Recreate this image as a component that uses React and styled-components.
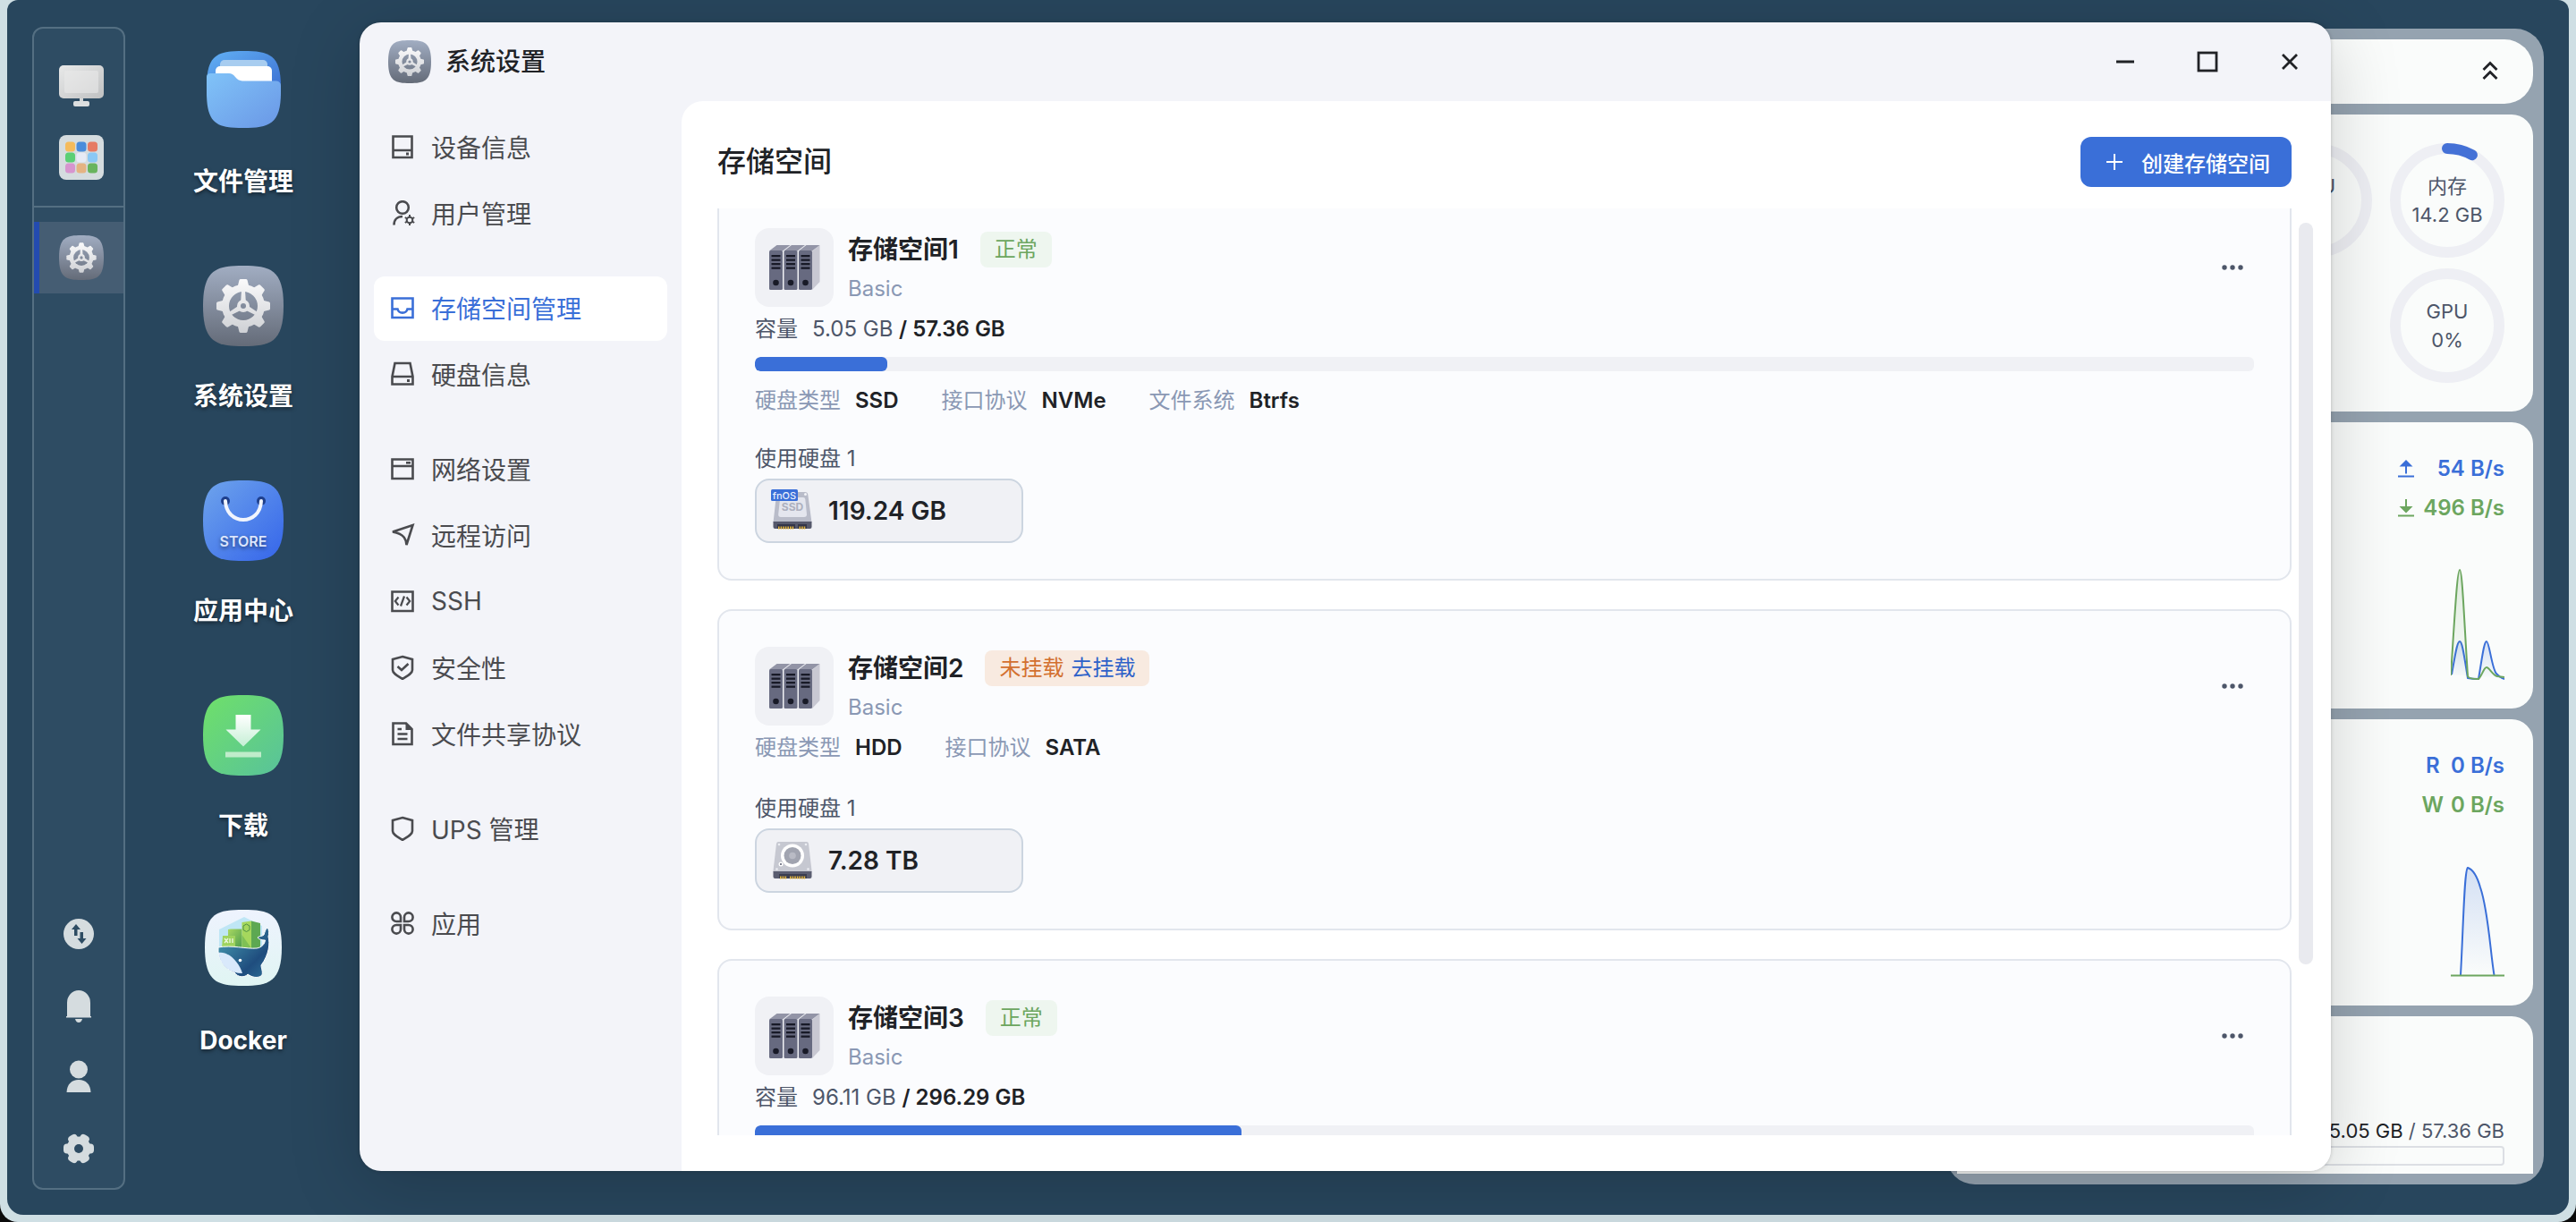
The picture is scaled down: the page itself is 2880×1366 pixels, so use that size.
import React, { useEffect, useRef, useState } from "react";
import styled, { createGlobalStyle } from "styled-components";

const GlobalStyle = createGlobalStyle`
  * {
    box-sizing: border-box;
  }

  body {
    margin: 0;
    background: #0b0b0b;
    font-family: Inter, "Noto Sans CJK SC", sans-serif;
    color: #202226;
  }

  button {
    padding: 0;
    border: 0;
    background: none;
    font: inherit;
    color: inherit;
    cursor: pointer;
  }

  a {
    color: inherit;
    text-decoration: none;
  }

  svg {
    display: block;
    flex: none;
  }
`;

const Screen = styled.div`
  position: relative;
  height: 100vh;
  padding: 0 8px 8px;
  overflow: hidden;
  border-radius: 0 0 20px 20px;
  background: #cfdfe4;
`;

const Desktop = styled.main`
  display: flex;
  height: 100%;
  padding: 30px 28px 28px;
  border-radius: 12px 12px 18px 18px;
  background: #28465d;
`;

const Dock = styled.nav`
  display: flex;
  flex-direction: column;
  width: 104px;
  padding-top: 24px;
  border: 2px solid #546f82;
  border-radius: 12px;
  background: #2e4c63;
`;

const DockButton = styled.button`
  display: flex;
  align-items: center;
  justify-content: center;
  height: 80px;
  border-left: 6px solid ${(p) => (p.$active ? "#234bb0" : "transparent")};
  background: ${(p) => (p.$active ? "#455d73" : "none")};
`;

const DockDivider = styled.hr`
  width: 100%;
  height: 2px;
  margin: 14px 0 16px;
  border: 0;
  background: #546f82;
`;

const DockFooter = styled.div`
  display: flex;
  flex-direction: column;
  margin-top: auto;
  padding-bottom: 4px;
`;

const TrayButton = styled.button`
  display: flex;
  align-items: center;
  justify-content: center;
  height: 80px;
`;

const AppList = styled.div`
  display: flex;
  flex-direction: column;
  align-items: center;
  gap: 74px;
  width: 264px;
  padding-top: 27px;
`;

const AppButton = styled.button`
  display: flex;
  flex-direction: column;
  align-items: center;
  gap: 36px;
  color: #fff;
  font-size: 28px;
  font-weight: 700;
  line-height: 40px;
  text-shadow: 0 2px 4px rgba(0, 0, 0, 0.5);
`;

const Widgets = styled.aside`
  display: flex;
  flex-direction: column;
  gap: 12px;
  width: 668px;
  margin: 2px 0 6px auto;
  padding: 12px;
  overflow: hidden;
  border-radius: 32px;
  background: #95a3b0;
`;

const Widget = styled.section`
  flex: none;
  padding: 30px 32px 32px;
  border-radius: 24px;
  background: #fafcfb;
`;

const WidgetHeader = styled(Widget)`
  display: flex;
  align-items: center;
  justify-content: flex-end;
  height: 72px;
  border-radius: 32px;
`;

const Rings = styled(Widget)`
  display: grid;
  grid-template-columns: 128px 128px;
  gap: 12px 20px;
  justify-content: end;
  padding: 32px;
`;

const RingBox = styled.div`
  display: grid;
  grid-column: ${(p) => p.$column};
  place-items: center;

  > * {
    grid-area: 1 / 1;
  }
`;

const RingText = styled.div`
  height: 64px;
  color: #4d5669;
  font-size: 22px;
  line-height: 32px;
  text-align: center;
`;

const Rates = styled.div`
  display: grid;
  grid-template-columns: auto auto;
  justify-content: end;
  justify-items: end;
  align-items: center;
  column-gap: ${(p) => (p.$narrow ? "8px" : "10px")};
  font-size: 24px;
  font-weight: 600;
  line-height: 44px;
`;

const Rate = styled.span`
  justify-self: ${(p) => (p.$sign ? "center" : "end")};
  color: ${(p) => (p.$down ? "#6ca65f" : "#3a6fd8")};
`;

const ChartBox = styled.div`
  display: flex;
  justify-content: flex-end;
  margin-top: 46px;
`;

const StorageWidget = styled(Widget)`
  flex: 1 0 0;
  padding: 112px 32px 0;
  border-radius: 24px 24px 0 0;
`;

const Usage = styled.div`
  color: #202226;
  font-size: 22px;
  line-height: 33px;
  text-align: right;

  span {
    color: #4d5669;
  }
`;

const UsageTrack = styled.div`
  height: 22px;
  border: 2px solid #dcdfe4;
  border-radius: 4px;
`;

const Window = styled.section`
  position: absolute;
  top: 25px;
  right: 274px;
  bottom: 57px;
  left: 402px;
  display: grid;
  grid-template: 88px minmax(0, 1fr) / 360px minmax(0, 1fr);
  overflow: hidden;
  border-radius: 24px;
  background: #f3f4f9;
  box-shadow: 0 16px 80px rgba(0, 0, 0, 0.18), 0 0 4px rgba(0, 0, 0, 0.2);
`;

const TitleBar = styled.header`
  display: flex;
  grid-column: 1 / -1;
  align-items: center;
  gap: 16px;
  padding-left: 32px;
`;

const WindowTitle = styled.h1`
  margin: 0;
  font-size: 28px;
  font-weight: 500;
  line-height: 40px;
`;

const Controls = styled.div`
  display: flex;
  align-self: stretch;
  margin-left: auto;
`;

const ControlButton = styled.button`
  display: flex;
  align-items: center;
  justify-content: center;
  width: 92px;
`;

const Sidebar = styled.nav`
  display: flex;
  flex-direction: column;
  gap: 34px;
  padding: 16px;
`;

const MenuGroup = styled.div`
  display: flex;
  flex-direction: column;
  gap: 2px;
`;

const MenuItem = styled.a`
  display: flex;
  align-items: center;
  gap: 18px;
  height: 72px;
  padding: 0 0 2px 18px;
  border-radius: 12px;
  background: ${(p) => (p.$active ? "#fff" : "none")};
  color: ${(p) => (p.$active ? "#3a6fd8" : "#4a4b4f")};
  font-size: 28px;
`;

const Content = styled.div`
  display: flex;
  flex-direction: column;
  min-height: 0;
  padding: 40px 20px 40px 40px;
  border-top-left-radius: 24px;
  background: #fff;
`;

const PageHeader = styled.div`
  display: flex;
  align-items: center;
  justify-content: space-between;
  margin-bottom: 24px;
  padding-right: 24px;
`;

const PageTitle = styled.h2`
  margin: 0;
  font-size: 32px;
  font-weight: 500;
  line-height: 48px;
`;

const PrimaryButton = styled.button`
  display: flex;
  align-items: center;
  gap: 20px;
  height: 56px;
  padding: 0 24px 0 28px;
  border-radius: 12px;
  background: #3a6fd8;
  color: #fff;
  font-size: 24px;
  font-weight: 500;
`;

const ScrollArea = styled.div`
  display: flex;
  flex: 1;
  gap: 8px;
  min-height: 0;
`;

const ScrollBody = styled.div`
  display: flex;
  flex: 1;
  flex-direction: column;
  gap: 32px;
  overflow-y: auto;
  scrollbar-width: none;
`;

const ScrollTrack = styled.div`
  width: 16px;
`;

const ScrollThumb = styled.div`
  border-radius: 8px;
  background: #e9eaef;
`;

const Card = styled.article`
  flex: none;
  min-height: ${(p) => (p.$tall ? "436px" : "359px")};
  padding: 40px;
  border: 2px solid #e2e6ed;
  border-radius: 16px;
  background: #fbfcfe;
`;

const CardHeader = styled.div`
  display: flex;
  align-items: center;
  gap: 16px;
`;

const ServerBox = styled.div`
  width: 88px;
  height: 88px;
  border-radius: 16px;
  background: #f0f1f5;
`;

const CardHeading = styled.div`
  flex: 1;
`;

const TitleRow = styled.div`
  display: flex;
  align-items: center;
  gap: 24px;
  height: 48px;
`;

const CardTitle = styled.h3`
  margin: 0;
  font-size: 28px;
  font-weight: 600;
  line-height: 40px;
`;

const Badge = styled.span`
  display: flex;
  gap: 8px;
  padding: 0 16px;
  border-radius: 8px;
  background: ${(p) => (p.$warning ? "#f8eae0" : "#eef6ef")};
  color: ${(p) => (p.$warning ? "#d3702f" : "#6ca65f")};
  font-size: 24px;
  line-height: 40px;

  a {
    color: #2f62c9;
  }
`;

const CardMode = styled.div`
  color: #8a98b4;
  font-size: 24px;
  line-height: 40px;
`;

const MoreButton = styled.button`
  display: flex;
  align-items: center;
  justify-content: center;
  width: 48px;
  height: 48px;
`;

const Capacity = styled.div`
  display: flex;
  gap: 16px;
  color: #4d5669;
  font-size: 24px;
  line-height: 50px;

  strong {
    color: #202226;
    font-weight: 600;
  }
`;

const Progress = styled.div`
  height: 16px;
  margin: 6px 0 8px;
  overflow: hidden;
  border-radius: 6px;
  background: #f0f1f5;
`;

const ProgressFill = styled.div`
  height: 100%;
  border-radius: 6px;
  background: #3a6fd8;
`;

const Specs = styled.dl`
  display: flex;
  gap: 48px;
  margin: 0 0 ${(p) => (p.$loose ? "21px" : "18px")};
  font-size: 24px;
  line-height: 50px;

  div {
    display: flex;
    gap: 16px;
  }

  dt {
    color: #8a98b4;
  }

  dd {
    margin: 0;
    font-weight: 600;
  }
`;

const DiskCount = styled.div`
  color: #4d5669;
  font-size: 24px;
  line-height: 44px;
`;

const Disk = styled.div`
  display: flex;
  align-items: center;
  gap: 16px;
  width: 300px;
  height: 72px;
  padding-left: 16px;
  border: 2px solid #ccd5e0;
  border-radius: 16px;
  background: #f0f1f5;
  font-size: 28px;
  font-weight: 600;
`;

function SettingsIcon({ size, id }) {
  const teeth = [0, 45, 90, 135, 180, 225, 270, 315];
  return (
    <svg width={size} height={size} viewBox="0 0 90 90">
      <defs>
        <linearGradient id={`${id}-bg`} x1="0" y1="0" x2="0" y2="1">
          <stop offset="0" stopColor="#a1adc2" />
          <stop offset="1" stopColor="#646b78" />
        </linearGradient>
        <linearGradient id={`${id}-gear`} gradientUnits="userSpaceOnUse" x1="0" y1="15" x2="0" y2="75">
          <stop offset="0" stopColor="#fafafb" />
          <stop offset="1" stopColor="#cfd1d5" />
        </linearGradient>
        <mask id={`${id}-mask`}>
          <circle cx="45" cy="45" r="24" fill="#fff" />
          {teeth.map((a) => (
            <path
              key={a}
              d="M38.500 24L40.500 16Q41 15 42 15H48Q49 15 49.500 16L51.500 24Z"
              fill="#fff"
              transform={`rotate(${a} 45 45)`}
            />
          ))}
          <circle cx="45" cy="45" r="16" fill="#000" />
          {[0, 120, 240].map((a) => (
            <path key={a} d="M43 28H47L48 42H42Z" fill="#fff" transform={`rotate(${a} 45 45)`} />
          ))}
          <circle cx="45" cy="45" r="7" fill="#fff" />
          <circle cx="45" cy="45" r="3" fill="#000" />
        </mask>
      </defs>
      <path
        d="M45 0C75 0 90 4 90 45S75 90 45 90S0 86 0 45S15 0 45 0Z"
        fill={`url(#${id}-bg)`}
      />
      <rect width="90" height="90" fill={`url(#${id}-gear)`} mask={`url(#${id}-mask)`} />
    </svg>
  );
}

function MonitorIcon() {
  return (
    <svg width="50" height="50" viewBox="0 0 50 50">
      <defs>
        <linearGradient id="monitor" x1="0" y1="0" x2="1" y2="1">
          <stop offset="0" stopColor="#e8e9e9" />
          <stop offset="1" stopColor="#c0c1c2" />
        </linearGradient>
      </defs>
      <path d="M23 37H27V43H23Z" fill="#d2d4d5" />
      <rect x="16" y="42" width="18" height="6" rx="2" fill="#dcdedf" />
      <rect y="2" width="50" height="37" rx="5" fill="url(#monitor)" />
      <rect x="6" y="8" width="38" height="25" rx="2" fill="#e9eaea" opacity=".6" />
    </svg>
  );
}

function LauncherIcon() {
  const colors = [
    "#f5bb5c", "#4a8cdb", "#e67b64",
    "#5bcf75", "#e6eaf5", "#8ac8f5",
    "#d795cf", "#e5b383", "#69b45e",
  ];
  return (
    <svg width="50" height="50" viewBox="0 0 50 50">
      <rect width="50" height="50" rx="8" fill="#d5dcdf" />
      {colors.map((color, i) => (
        <rect
          key={color}
          x={7 + (i % 3) * 12.5}
          y={7.5 + Math.floor(i / 3) * 12}
          width="11"
          height="11"
          rx="3.500"
          fill={color}
        />
      ))}
    </svg>
  );
}

function FolderIcon() {
  return (
    <svg width="90" height="90" viewBox="0 0 90 90">
      <defs>
        <linearGradient id="folder-back" x1="0" y1="0" x2="1" y2="1">
          <stop offset="0" stopColor="#62b1f5" />
          <stop offset="1" stopColor="#3a6cd0" />
        </linearGradient>
        <linearGradient id="folder-front" x1="0" y1="0" x2="1" y2="1">
          <stop offset="0" stopColor="#80c3f8" />
          <stop offset="1" stopColor="#6a97e6" />
        </linearGradient>
      </defs>
      <path d="M45 0C74 0 87 4 87 40V50H4V40C4 4 16 0 45 0Z" fill="url(#folder-back)" />
      <rect x="19" y="10" width="53" height="20" rx="5" fill="#a8cdf0" />
      <rect x="14" y="17" width="63" height="25" rx="5" fill="#fff" />
      <path
        d="M4 29Q4 25 9 25H29Q33 25 36 29Q39 33 44 33.500H82Q87 34 87 39V46C87 82 74 86 45 86S4 82 4 46Z"
        fill="url(#folder-front)"
      />
    </svg>
  );
}

function StoreIcon() {
  return (
    <svg width="90" height="90" viewBox="0 0 90 90">
      <defs>
        <linearGradient id="store" x1="0" y1="0" x2="1" y2="1">
          <stop offset="0" stopColor="#6ea4ec" />
          <stop offset="1" stopColor="#3565ea" />
        </linearGradient>
      </defs>
      <path d="M45 0C75 0 90 4 90 45S75 90 45 90S0 86 0 45S15 0 45 0Z" fill="url(#store)" />
      <circle cx="25" cy="23" r="5" fill="#1e3f8c" />
      <circle cx="65" cy="23" r="5" fill="#1e3f8c" />
      <path d="M25 23C26 51 64 51 65 23" fill="none" stroke="#f1f5fd" strokeWidth="4" strokeLinecap="round" />
      <text x="45" y="74" textAnchor="middle" fontSize="16" fontWeight="600" fill="#dbe5fc">
        STORE
      </text>
    </svg>
  );
}

function DownloadIcon() {
  return (
    <svg width="90" height="90" viewBox="0 0 90 90">
      <defs>
        <linearGradient id="download" x1="0" y1="0" x2="1" y2="1">
          <stop offset="0" stopColor="#6fe069" />
          <stop offset="1" stopColor="#58c29b" />
        </linearGradient>
        <linearGradient id="download-arrow" x1="0" y1="0" x2="0" y2="1">
          <stop offset="0" stopColor="#fff" />
          <stop offset="1" stopColor="#c5efd5" />
        </linearGradient>
      </defs>
      <path d="M45 0C75 0 90 4 90 45S75 90 45 90S0 86 0 45S15 0 45 0Z" fill="url(#download)" />
      <path d="M36.500 22H53.500V38.500H64.500L45 57.500L25.500 38.500H36.500Z" fill="url(#download-arrow)" />
      <rect x="25" y="63.500" width="40" height="6" fill="#bfecca" />
    </svg>
  );
}

function DockerIcon() {
  return (
    <svg width="90" height="90" viewBox="0 0 90 90">
      <defs>
        <linearGradient id="docker-bg" x1="0" y1="0" x2="0" y2="1">
          <stop offset="0" stopColor="#eef3fe" />
          <stop offset="1" stopColor="#e0f5f3" />
        </linearGradient>
        <linearGradient id="whale" x1="0" y1="0" x2="1" y2="1">
          <stop offset="0" stopColor="#4ba5b8" />
          <stop offset="0.700" stopColor="#1f4d7e" />
          <stop offset="1" stopColor="#2d6f96" />
        </linearGradient>
        <linearGradient id="crate" x1="0" y1="0" x2="1" y2="1">
          <stop offset="0" stopColor="#a9d862" />
          <stop offset="1" stopColor="#4f9e4c" />
        </linearGradient>
      </defs>
      <path d="M45 0C74 0 88 4 88 42S74 85 45 85S2 81 2 42S16 0 45 0Z" fill="url(#docker-bg)" />
      <path d="M46 8L66 18V44H18V22Z" fill="#bfe6f5" />
      <path d="M28 22L31 21.500H43.500V42H28Z" fill="url(#crate)" />
      <path d="M22 29H36V43H21Z" fill="#9fd35f" />
      <path d="M43.500 14L54 12.500V43L43.500 42Z" fill="#a5d75d" />
      <path d="M54 12.500L64 15V43H54Z" fill="#5da852" />
      <path d="M43.500 28L54 43H43.500Z" fill="#7fc055" />
      <path d="M45 18L48.500 16L52 18V22.500L48.500 24.500L45 22.500Z" fill="none" stroke="#4f9145" strokeWidth="1" />
      <path d="M24 32L28 37M28 32L24 37M30 32V37M33 32V37" stroke="#eaf7dc" strokeWidth="1.400" />
      <path
        d="M17 42C32 39 48 44 60 43C66 42 69 38 69.500 34C66 34 62 33 61 31C63 29 66 30 68 28C69 25 70 21 72 20C74 22 74 27 73 30C75 37 74 50 65 62C65 66 68 71 65 74C60 77 54 75 50 72C47 76 39 76 35 70C24 66 16 55 17 42Z"
        fill="url(#whale)"
        stroke="#fff"
        strokeWidth="1"
      />
      <path d="M17.500 48C28 46 40 58 44 71C29 71 19 61 17.500 48Z" fill="#d9e9fb" />
      <circle cx="41.500" cy="56.500" r="1.800" fill="#fff" />
    </svg>
  );
}

const desktopApps = [
  { name: "文件管理", icon: <FolderIcon /> },
  { name: "系统设置", icon: <SettingsIcon size={90} id="desk" /> },
  { name: "应用中心", icon: <StoreIcon /> },
  { name: "下载", icon: <DownloadIcon /> },
  { name: "Docker", icon: <DockerIcon /> },
];

const trayIcons = [
  {
    name: "传输",
    icon: (
      <>
        <circle cx="17" cy="17" r="17" fill="#d5dcdf" />
        <path d="M14 6L19 12H15.500V19H12V12H9Z" fill="#2e4c63" />
        <path d="M20.500 28L15.500 22H18.500V15H22V22H25.500Z" fill="#2e4c63" />
      </>
    ),
  },
  {
    name: "通知",
    icon: (
      <>
        <path d="M4 29V14A13 14 0 0 1 30 14V29H31V30.500H3V29Z" fill="#d5dcdf" />
        <path d="M13 32H21Q20 36 17 36T13 32Z" fill="#d5dcdf" />
      </>
    ),
  },
  {
    name: "用户",
    icon: (
      <>
        <circle cx="17" cy="8.500" r="10" fill="#d5dcdf" />
        <path d="M3.500 34C4 25 9 20 17 20S30 25 30.500 34Z" fill="#d5dcdf" />
      </>
    ),
  },
  {
    name: "设置",
    icon: (
      <>
        <mask id="cog-hole">
          <rect x="-2" y="-2" width="38" height="38" fill="#fff" />
          <circle cx="17" cy="17" r="5" fill="#000" />
        </mask>
        <g mask="url(#cog-hole)" fill="#d5dcdf">
          <circle cx="17" cy="17" r="13.500" />
          {[0, 60, 120].map((a) => (
            <rect key={a} y="11.500" width="34" height="11" rx="4" transform={`rotate(${a} 17 17)`} />
          ))}
        </g>
      </>
    ),
  },
];

const menuGroups = [
  [
    {
      name: "设备信息",
      icon: (
        <>
          <path d="M3.500 2.500H24.500V26H3.500ZM3.500 18H24.500" />
          <path d="M18 22H21" strokeWidth="3" />
        </>
      ),
    },
    {
      name: "用户管理",
      icon: (
        <>
          <circle cx="14" cy="8" r="6.800" />
          <path d="M4.500 27.500C4.500 22 8 18 14 18" />
          <circle cx="22" cy="22" r="3.300" strokeWidth="2" />
          <path
            d="M22 16V18.500M22 25.500V28M16.800 19L19 20.300M25 23.700L27.200 25M16.800 25L19 23.700M25 20.300L27.200 19"
            strokeWidth="2"
          />
        </>
      ),
    },
  ],
  [
    {
      name: "存储空间管理",
      active: true,
      icon: <path d="M2.500 3.500H25.500V25H2.500ZM2.500 15.500H8.500C10 21 18 21 19.500 15.500H25.500" />,
    },
    {
      name: "硬盘信息",
      icon: (
        <>
          <path d="M5.500 2H22.500L25.500 17V25.500H2.500V17ZM2.500 17H25.500" />
          <path d="M19 21.500H22" strokeWidth="3" />
        </>
      ),
    },
  ],
  [
    {
      name: "网络设置",
      icon: (
        <>
          <path d="M2.500 3.500H25.500V25H2.500ZM2.500 11H25.500" />
          <path d="M18 7.300H23" />
        </>
      ),
    },
    { name: "远程访问", icon: <path d="M3 10.500L25.500 3L18.500 25C18 20 17 13 3 10.500Z" /> },
    {
      name: "SSH",
      icon: (
        <>
          <path d="M2.500 3.500H25.500V25H2.500Z" />
          <path d="M9.500 9.500L5.800 14L9.500 18.500M18.500 9.500L22.200 14L18.500 18.500M16 8.500L12 19.500" strokeWidth="2.200" />
        </>
      ),
    },
    {
      name: "安全性",
      icon: <path d="M14 2L25 5V17C25 21 19 24 14 27C9 24 3 21 3 17V5ZM8.500 13L13 17L20.500 10" />,
    },
    {
      name: "文件共享协议",
      icon: (
        <>
          <path d="M3.500 2.500H18L24.500 9V26H3.500Z" />
          <path d="M17.500 2L25.500 10H17.500Z" fill="currentColor" stroke="none" />
          <path d="M8.500 9H13M8.500 14.500H19.500M8.500 20H19.500" />
        </>
      ),
    },
  ],
  [
    { name: "UPS 管理", icon: <path d="M14 2L25 5V17C25 21 19 24 14 27C9 24 3 21 3 17V5Z" /> },
  ],
  [
    {
      name: "应用",
      icon: (
        <path d="M12 12H7.200A4.800 4.800 0 1 1 12 7.200ZM16 12V7.200A4.800 4.800 0 1 1 20.800 12ZM12 16V20.800A4.800 4.800 0 1 1 7.200 16ZM16 16H20.800A4.800 4.800 0 1 1 16 20.800Z" />
      ),
    },
  ],
];

const spaces = [
  {
    name: "存储空间1",
    mode: "Basic",
    used: 5.05,
    total: 57.36,
    specs: [
      ["硬盘类型", "SSD"],
      ["接口协议", "NVMe"],
      ["文件系统", "Btrfs"],
    ],
    disk: { type: "ssd", size: "119.24 GB" },
  },
  {
    name: "存储空间2",
    mode: "Basic",
    unmounted: true,
    specs: [
      ["硬盘类型", "HDD"],
      ["接口协议", "SATA"],
    ],
    disk: { type: "hdd", size: "7.28 TB" },
  },
  { name: "存储空间3", mode: "Basic", used: 96.11, total: 296.29 },
];

function ServerIcon() {
  return (
    <svg width="88" height="88" viewBox="0 0 88 88">
      <path d="M64 26L72.500 19V60L64 69Z" fill="#c8c8d2" />
      {[16, 32.5, 49].map((x) => (
        <g key={x}>
          <path d={`M${x} 25.500L${x + 8.5} 19H${x + 23.5}L${x + 15} 25.500Z`} fill="#9294a6" />
          <rect x={x} y="25" width="15" height="44" rx="1.500" fill="#676a80" />
          {[30, 34.5, 39, 43.5].map((y) => (
            <rect key={y} x={x + 2.5} y={y} width="10" height="2.300" fill="#181a27" />
          ))}
          <circle cx={x + 7.5} cy="61" r="3.300" fill="#181a27" />
        </g>
      ))}
    </svg>
  );
}

function SsdIcon() {
  return (
    <svg width="48" height="48" viewBox="0 0 48 48">
      <path d="M9 3H38Q41 3 41.300 6L45.500 37H2.500L6 6Q6.500 3 9 3Z" fill="#b9bcc9" />
      <path d="M12 9H36Q38 9 38.300 11L40 28Q40 31 37 31H11Q8 31 8.200 28L10 11Z" fill="#e4e6ee" />
      <circle cx="38.500" cy="5.500" r="1.500" fill="#f3f4f8" />
      <path d="M2.500 36H45.500V42Q45.500 44 43.500 44H4.500Q2.500 44 2.500 42Z" fill="#55586b" />
      <path d="M7 39H27V44H7ZM30 39H40V44H30Z" fill="#33364a" />
      <path d="M8 43H26M31.500 43H39" stroke="#e3b53d" strokeWidth="3" strokeDasharray="1.600 1" />
      <text x="24" y="24" textAnchor="middle" fontSize="12" fontWeight="700" fill="#adb0be">
        SSD
      </text>
      <rect width="30" height="13" rx="1.500" fill="#3a6fd8" />
      <text x="15" y="10.500" textAnchor="middle" fontSize="11" fontWeight="500" fill="#e8effc">
        fnOS
      </text>
    </svg>
  );
}

function HddIcon() {
  return (
    <svg width="48" height="48" viewBox="0 0 48 48">
      <path d="M8 3H40Q41.500 3 42 5L45.500 35V37H2.500V35L6 5Q6.500 3 8 3Z" fill="#c6c8d1" />
      <path d="M2.500 36H45.500V42Q45.500 44 43.500 44H4.500Q2.500 44 2.500 42Z" fill="#5a5d70" />
      <path d="M9 39H40V44H9Z" fill="#3b3e50" />
      <path d="M10 43H18M21 43H39" stroke="#e3b53d" strokeWidth="3" strokeDasharray="1.600 1" />
      <circle cx="24" cy="18.500" r="13" fill="#fff" />
      <circle cx="11" cy="28" r="2.500" fill="#fff" />
      <circle cx="24" cy="18.500" r="9.500" fill="#a1a4b0" />
      <circle cx="24" cy="18.500" r="3.800" fill="#b9bbc5" />
      <circle cx="11" cy="28" r="1" fill="#55586b" />
      {[[9, 6], [39, 6], [6.5, 33.5], [41.5, 33.5]].map(([x, y]) => (
        <circle key={`${x}-${y}`} cx={x} cy={y} r="1.300" fill="#eceef3" />
      ))}
    </svg>
  );
}

function SpaceCard({ space }) {
  const hasCapacity = space.total !== undefined;
  return (
    <Card $tall={hasCapacity}>
      <CardHeader>
        <ServerBox>
          <ServerIcon />
        </ServerBox>
        <CardHeading>
          <TitleRow>
            <CardTitle>{space.name}</CardTitle>
            {space.unmounted ? (
              <Badge $warning>
                未挂载 <a href="#mount">去挂载</a>
              </Badge>
            ) : (
              <Badge>正常</Badge>
            )}
          </TitleRow>
          <CardMode>{space.mode}</CardMode>
        </CardHeading>
        <MoreButton aria-label="更多">
          <svg width="24" height="24" viewBox="0 0 24 24" fill="#4d5669">
            <circle cx="3" cy="12" r="2.700" />
            <circle cx="12" cy="12" r="2.700" />
            <circle cx="21" cy="12" r="2.700" />
          </svg>
        </MoreButton>
      </CardHeader>
      {hasCapacity && (
        <>
          <Capacity>
            <span>容量</span>
            <span>
              {space.used} GB <strong>/ {space.total} GB</strong>
            </span>
          </Capacity>
          <Progress>
            <ProgressFill style={{ width: `${(space.used / space.total) * 100}%` }} />
          </Progress>
        </>
      )}
      {space.specs && (
        <Specs $loose={!hasCapacity}>
          {space.specs.map(([label, value]) => (
            <div key={label}>
              <dt>{label}</dt>
              <dd>{value}</dd>
            </div>
          ))}
        </Specs>
      )}
      {space.disk && (
        <>
          <DiskCount>使用硬盘 1</DiskCount>
          <Disk>
            {space.disk.type === "ssd" ? <SsdIcon /> : <HddIcon />}
            {space.disk.size}
          </Disk>
        </>
      )}
    </Card>
  );
}

function SpaceList() {
  const bodyRef = useRef(null);
  const [thumb, setThumb] = useState({ top: 0, height: 0 });

  const updateThumb = () => {
    const { scrollTop, clientHeight, scrollHeight } = bodyRef.current;
    const ratio = clientHeight / scrollHeight;
    setThumb({ top: scrollTop * ratio, height: clientHeight * ratio });
  };

  useEffect(() => {
    bodyRef.current.scrollTop = 20;
    updateThumb();
    window.addEventListener("resize", updateThumb);
    return () => window.removeEventListener("resize", updateThumb);
  }, []);

  return (
    <ScrollArea>
      <ScrollBody ref={bodyRef} onScroll={updateThumb}>
        {spaces.map((space) => (
          <SpaceCard key={space.name} space={space} />
        ))}
      </ScrollBody>
      <ScrollTrack>
        <ScrollThumb style={{ height: thumb.height, marginTop: thumb.top }} />
      </ScrollTrack>
    </ScrollArea>
  );
}

function Ring({ label, value, percent = 0, column }) {
  const length = 2 * Math.PI * 58;
  return (
    <RingBox $column={column}>
      <svg width="128" height="128" viewBox="0 0 128 128" fill="none" strokeWidth="12">
        <circle cx="64" cy="64" r="58" stroke="#eeeff4" />
        {percent > 0 && (
          <circle
            cx="64"
            cy="64"
            r="58"
            stroke="#4471d6"
            strokeLinecap="round"
            strokeDasharray={`${(length * percent) / 100} ${length}`}
            transform="rotate(-90 64 64)"
          />
        )}
      </svg>
      <RingText>
        <div>{label}</div>
        <div>{value}</div>
      </RingText>
    </RingBox>
  );
}

function TransferIcon({ down }) {
  return (
    <svg width="18" height="20" viewBox="0 0 18 20" fill={down ? "#6ca65f" : "#3a6fd8"}>
      <rect y="17.500" width="18" height="2" />
      {down ? (
        <path d="M8 0H10V8H16.500L9 15.500L1.500 8H8Z" />
      ) : (
        <path d="M9 0L16.500 7.500H10V15.500H8V7.500H1.500Z" />
      )}
    </svg>
  );
}

function NetworkChart() {
  return (
    <svg width="60" height="124" viewBox="0 0 60 124" strokeWidth="2">
      <defs>
        <linearGradient id="net-up" x1="0" y1="0" x2="0" y2="1">
          <stop offset="0" stopColor="#3a6fd8" stopOpacity="0.200" />
          <stop offset="1" stopColor="#3a6fd8" stopOpacity="0" />
        </linearGradient>
        <linearGradient id="net-down" x1="0" y1="0" x2="0" y2="1">
          <stop offset="0" stopColor="#6ca65f" stopOpacity="0.200" />
          <stop offset="1" stopColor="#6ca65f" stopOpacity="0" />
        </linearGradient>
      </defs>
      <path
        d="M1 118C5 96 7 81 10 81S15 98 19 122C24 123 28 123 31 123C35 100 37 81 40 81S46 112 51 117C54 120 57 123 60 123"
        fill="url(#net-up)"
        stroke="#3a6fd8"
      />
      <path
        d="M0 119C4 60 7 1 10 1S15 60 19 120C20 123 28 123 31 123C35 119 37 110 40 110S47 119 52 120L60 121"
        fill="url(#net-down)"
        stroke="#6ca65f"
      />
    </svg>
  );
}

function DiskChart() {
  return (
    <svg width="60" height="124" viewBox="0 0 60 124" strokeWidth="2">
      <path
        d="M11 122C14 70 15 4 19 2C25 4 29 10 33 24C42 50 44 95 48.500 122"
        fill="url(#net-up)"
        stroke="#3a6fd8"
      />
      <path d="M0 122.500H60" stroke="#6ca65f" />
    </svg>
  );
}

function App() {
  return (
    <Screen>
      <GlobalStyle />
      <Desktop>
        <Dock>
          <DockButton aria-label="桌面">
            <MonitorIcon />
          </DockButton>
          <DockButton aria-label="启动器">
            <LauncherIcon />
          </DockButton>
          <DockDivider />
          <DockButton $active aria-label="系统设置">
            <SettingsIcon size={50} id="dock" />
          </DockButton>
          <DockFooter>
            {trayIcons.map((item) => (
              <TrayButton key={item.name} aria-label={item.name}>
                <svg width="34" height="34" viewBox="0 0 34 34" overflow="visible">
                  {item.icon}
                </svg>
              </TrayButton>
            ))}
          </DockFooter>
        </Dock>

        <AppList>
          {desktopApps.map((app) => (
            <AppButton key={app.name}>
              {app.icon}
              {app.name}
            </AppButton>
          ))}
        </AppList>

        <Widgets>
          <WidgetHeader>
            <button aria-label="收起">
              <svg width="32" height="24" viewBox="0 0 32 24" fill="none" stroke="#202226" strokeWidth="2.800">
                <path d="M8.500 11L16 3.500L23.500 11M8.500 21L16 13.500L23.500 21" />
              </svg>
            </button>
          </WidgetHeader>
          <Rings>
            <Ring label="CPU" column={1} />
            <Ring label="内存" value="14.2 GB" percent={8} column={2} />
            <Ring label="GPU" value="0%" column={2} />
          </Rings>
          <Widget>
            <Rates>
              <TransferIcon />
              <Rate>54 B/s</Rate>
              <TransferIcon down />
              <Rate $down>496 B/s</Rate>
            </Rates>
            <ChartBox>
              <NetworkChart />
            </ChartBox>
          </Widget>
          <Widget>
            <Rates $narrow>
              <Rate $sign>R</Rate>
              <Rate>0 B/s</Rate>
              <Rate $sign $down>W</Rate>
              <Rate $down>0 B/s</Rate>
            </Rates>
            <ChartBox>
              <DiskChart />
            </ChartBox>
          </Widget>
          <StorageWidget>
            <Usage>
              5.05 GB <span>/ 57.36 GB</span>
            </Usage>
            <UsageTrack />
          </StorageWidget>
        </Widgets>
      </Desktop>

      <Window>
        <TitleBar>
          <SettingsIcon size={48} id="title" />
          <WindowTitle>系统设置</WindowTitle>
          <Controls>
            <ControlButton aria-label="最小化">
              <svg width="24" height="24" viewBox="0 0 24 24" fill="none" stroke="#202226" strokeWidth="2.800">
                <path d="M2 12H22" />
              </svg>
            </ControlButton>
            <ControlButton aria-label="最大化">
              <svg width="24" height="24" viewBox="0 0 24 24" fill="none" stroke="#202226" strokeWidth="2.800">
                <rect x="2" y="2" width="20" height="20" />
              </svg>
            </ControlButton>
            <ControlButton aria-label="关闭">
              <svg width="24" height="24" viewBox="0 0 24 24" fill="none" stroke="#202226" strokeWidth="2.800">
                <path d="M4 4L20 20M20 4L4 20" />
              </svg>
            </ControlButton>
          </Controls>
        </TitleBar>

        <Sidebar>
          {menuGroups.map((group) => (
            <MenuGroup key={group[0].name}>
              {group.map((item) => (
                <MenuItem key={item.name} href="#settings" $active={item.active}>
                  <svg width="28" height="28" viewBox="0 0 28 28" fill="none" stroke="currentColor" strokeWidth="2.600">
                    {item.icon}
                  </svg>
                  {item.name}
                </MenuItem>
              ))}
            </MenuGroup>
          ))}
        </Sidebar>

        <Content>
          <PageHeader>
            <PageTitle>存储空间</PageTitle>
            <PrimaryButton>
              <svg width="20" height="20" viewBox="0 0 20 20" stroke="#fff" strokeWidth="2">
                <path d="M10 1V19M1 10H19" />
              </svg>
              创建存储空间
            </PrimaryButton>
          </PageHeader>
          <SpaceList />
        </Content>
      </Window>
    </Screen>
  );
}

export default App;
